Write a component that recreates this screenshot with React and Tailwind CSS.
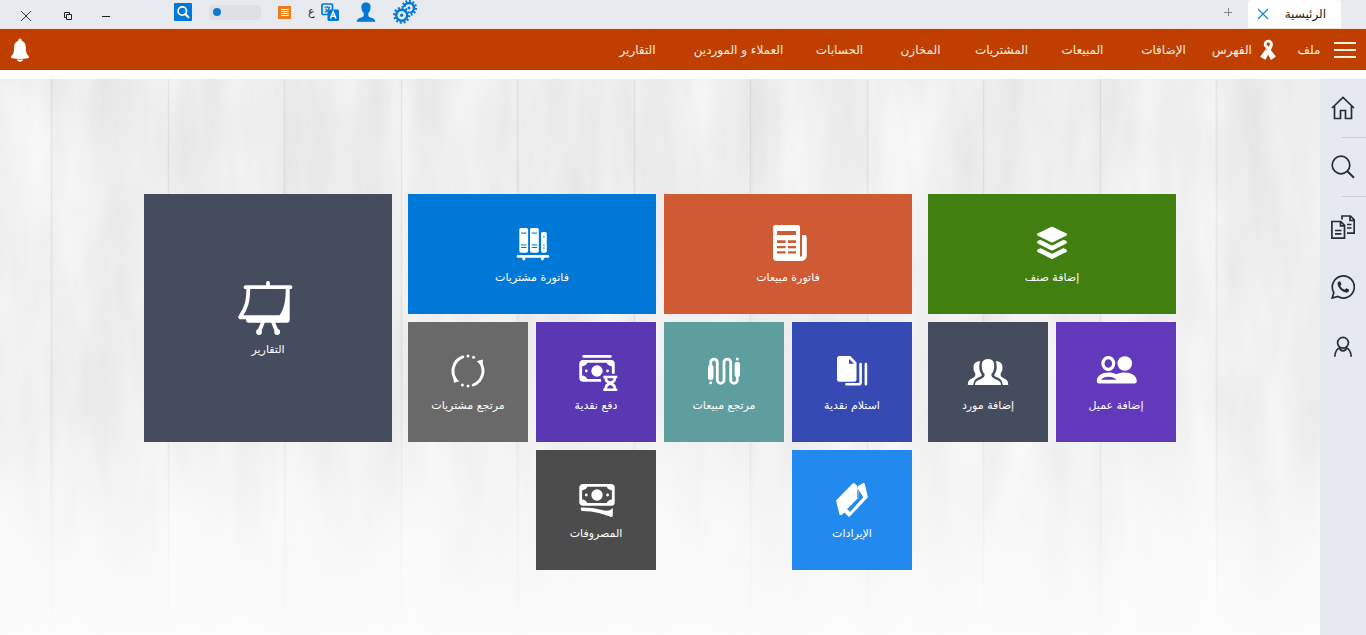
import { useState } from "react";

const NAV_LINKS = [
  { label: "الإضافات" },
  { label: "المبيعات" },
  { label: "المشتريات" },
  { label: "المخازن" },
  { label: "الحسابات" },
  { label: "العملاء و الموردين", wide: true },
  { label: "التقارير" },
];

/* ---------- Tile icons (40x40 grid, white) ---------- */

const TileSvg = ({ children }) => (
  <svg viewBox="0 0 40 40" className="h-10 w-10 overflow-visible" fill="#fff" aria-hidden="true">
    {children}
  </svg>
);

const LayersIcon = () => (
  <TileSvg>
    <path d="M20 4.8 34 11.6 20 18.4 6 11.6z" stroke="#fff" strokeWidth="2.2" strokeLinejoin="round" />
    <path
      d="M6 18.8 8.5 17.6 20 23.4 31.5 17.6 34 18.8 34 19.8 20 26.800 6 19.8z M6 27.200 8.5 26 20 31.800 31.500 26 34 27.200 34 28.200 20 35.200 6 28.200z"
      stroke="#fff"
      strokeWidth="1.6"
      strokeLinejoin="round"
    />
  </TileSvg>
);

const NewspaperIcon = () => (
  <TileSvg>
    <path
      fillRule="evenodd"
      d="M7 2h23a2 2 0 0 1 2 2v29.500h2V12h2.700a2 2 0 0 1 2 2v19a5 5 0 0 1-5 5H9a4 4 0 0 1-4-4V4a2 2 0 0 1 2-2zM9 8v4h19V8zM9 17.300V20h8.600v-2.700zM20 17.300V20h8v-2.700zM9 23v2.300h8.600V23zM20 23v2.300h8V23zM9 28.300v2.300h8.600v-2.300zM20 28.300v2.300h8v-2.300z"
    />
  </TileSvg>
);

const BooksIcon = () => (
  <TileSvg>
    <rect x="7.3" y="5" width="8.8" height="24.7" rx="1.8" />
    <rect x="18" y="5" width="8.8" height="24.7" rx="1.8" />
    <rect x="29" y="9" width="5.8" height="20.7" rx="1.6" />
    <path d="M9 9.200h5.400V11H9zM19.700 9.200h5.400V11h-5.400zM9 21h5.400v1.800H9zM19.700 21h5.400v1.800h-5.400zM31 13h1.800v1.400H31zM31 21.600h1.800V23H31z" fill="#59b4f5" />
    <path d="M9 24h5.400v1H9zM19.700 24h5.400v1h-5.400zM31 24.400h1.800v1H31z" fill="#0078d8" />
    <path d="M6 32h30a1.300 1.300 0 0 1 0 2.700h-4.200v1.400a1.400 1.400 0 0 1-2.800 0v-1.400H13.200v1.400a1.400 1.400 0 0 1-2.800 0v-1.400H6A1.300 1.300 0 0 1 6 32z" />
  </TileSvg>
);

const CustomersIcon = () => (
  <TileSvg>
    <ellipse cx="12.3" cy="12.5" rx="5.4" ry="5.9" fill="none" stroke="#fff" strokeWidth="3.2" />
    <circle cx="28.8" cy="12.5" r="7.3" />
    <path
      fillRule="evenodd"
      d="M.8 30c0-5.500 5.400-8.600 11.700-8.600 3 0 5.500.6 8 1.900 2.500-1.300 5.200-1.900 8.300-1.900 6.300 0 12 3.100 12 8.600 0 1.500-.8 2.400-2.200 2.400H3C1.600 32.400.8 31.500.8 30zM5 28.800h15.500c-2-2-4.600-3-8-3-3.300 0-5.900 1-7.500 3z"
    />
  </TileSvg>
);

const SuppliersIcon = () => (
  <TileSvg>
    <path d="M12.300 10.200c-4.600-.2-6.800 2.300-6.800 6.300 0 2.600.6 4.500 1.800 5.800.5 2.600-.6 4-3.500 5.200-2.800 1.200-4 2.800-4 6.500h5.600c.2-4.300 2.200-6.300 5.500-7.700 2.200-.9 3-1.500 2.900-2.600-1.600-2-2.500-4.300-2.500-7.100 0-2.400.2-4.500 1-6.400z" />
    <path d="M27.700 10.200c4.600-.2 6.800 2.300 6.800 6.300 0 2.600-.6 4.500-1.800 5.800-.5 2.600.6 4 3.500 5.200 2.800 1.200 4 2.800 4 6.500h-5.600c-.2-4.300-2.200-6.300-5.500-7.700-2.200-.9-3-1.500-2.900-2.600 1.600-2 2.500-4.300 2.500-7.100 0-2.400-.2-4.500-1-6.400z" />
    <path d="M20 8c-4.600 0-6.500 2.800-6.200 7.500.1 3.200.9 5.700 2.800 7.600.3 2.300-.8 3.800-4 5.100C8.700 29.700 7 30.800 7 34h26c0-3.200-1.700-4.300-5.600-5.800-3.200-1.300-4.300-2.800-4-5.100 1.900-1.900 2.700-4.400 2.800-7.600C26.500 10.800 24.600 8 20 8z" />
  </TileSvg>
);

const DocumentsIcon = () => (
  <TileSvg>
    <path fillRule="evenodd" d="M7.500 5h10.800l6.200 6.400v16.800a2.500 2.500 0 0 1-2.500 2.500H7.500A2.500 2.500 0 0 1 5 28.200V7.500A2.500 2.500 0 0 1 7.500 5zM17 8v4.800h5.200z" />
    <path d="M28.600 13v18.400q0 1.800-1.800 1.800H14.400M33.900 13v20.200" fill="none" stroke="#fff" strokeWidth="2.6" strokeLinecap="round" />
  </TileSvg>
);

const CablesIcon = () => (
  <TileSvg>
    <path
      d="M6.700 17v-5.600a3.300 3.300 0 0 1 6.600 0V29a3.350 3.350 0 0 0 6.700 0V11.400a3.350 3.350 0 0 1 6.700 0V29a3.300 3.300 0 0 0 6.600 0v-4"
      fill="none"
      stroke="#fff"
      strokeWidth="2.8"
    />
    <rect x="4" y="14" width="5.4" height="15" rx="2.2" />
    <rect x="30.6" y="11" width="5.4" height="15" rx="2.2" />
    <circle cx="6.7" cy="31.8" r="1.5" />
    <circle cx="33.3" cy="8" r="1.5" />
  </TileSvg>
);

const BillShape = ({ y }) => (
  <g transform={`translate(0 ${y})`}>
    <rect x="4.7" y="1.4" width="32.6" height="19" rx="2.2" fill="none" stroke="#fff" strokeWidth="2.8" />
    <path d="M5 1.500h6.500q-.5 4.500-6.500 5zM37 1.500h-6.500q.5 4.500 6.500 5zM5 20.300h6.500q-.5-4.500-6.500-5zM37 20.300h-6.500q.5-4.500 6.500-5z" />
    <circle cx="21" cy="11" r="5.7" />
    <circle cx="10.3" cy="11" r="1.4" />
    <circle cx="31.6" cy="11" r="1.4" />
  </g>
);

const PayCashIcon = () => (
  <TileSvg>
    <rect x="6.3" y="4" width="29.4" height="2.8" rx="1.4" />
    <BillShape y={9} />
    <path d="M25 22.800h16v6l-2 3.500 2 2v7H25z" fill="#5a38b4" />
    <path
      fillRule="evenodd"
      d="M27.300 24.700h14v2.600h-1.200c0 2.600-1.200 4.200-3 5 1.800.8 3 2.400 3 5.100h1.200V40h-14v-2.600h1.200c0-2.700 1.200-4.300 3-5.100-1.800-.8-3-2.400-3-5h-1.200zM31 27.300c.4 1.800 1.500 2.700 3.300 3 1.800-.3 2.900-1.200 3.300-3zM31 37.400h6.600c-.4-1.800-1.500-2.600-3.300-3.400-1.800.8-2.900 1.600-3.300 3.400z"
    />
  </TileSvg>
);

const ReturnIcon = () => (
  <TileSvg>
    <path d="M14.800 5.900A15 15 0 0 0 8 29M31.900 10.900A15 15 0 0 1 25.200 34" fill="none" stroke="#fff" strokeWidth="2.9" strokeLinecap="round" />
    <path d="M28.700 10.200 35 8.600 34.400 15.200zM5.200 25.500 5.900 31.700 11.400 30.300z" />
    <circle cx="20" cy="5" r="1.5" />
    <circle cx="25.6" cy="6.2" r="1.5" />
    <circle cx="14.4" cy="33.9" r="1.5" />
    <circle cx="20" cy="35" r="1.5" />
  </TileSvg>
);

const CardsIcon = () => (
  <TileSvg>
    <path d="M4 21.500 20.700 4.500q1-1 2 0l2.300 2.300 1.500 4.500-.2 8L12.500 33.500 9.700 36 7.600 36z" />
    <path
      fillRule="evenodd"
      d="M26 7 31.500 4q1-.2 1.200.8l3 12.500q.2 1-.5 1.700L18 37.200q-1 .9-1.900 0L12.500 33.400 15 29.500 18 33 31.200 18.200 26 10z"
    />
    <path d="M25.800 10.500v9.200L15.200 30.500" fill="none" stroke="#228aee" strokeWidth="1" />
  </TileSvg>
);

const ExpensesIcon = () => (
  <TileSvg>
    <BillShape y={5} />
    <path d="M5 28.600c8 .2 14 .6 20 2.200 3.400.9 6.400 1.200 9 .4l2.800-2.300v7.700q0 1.400-1.500 1.300C28 35.500 19 31.900 5.600 31.900q-1.200-1.500-.6-3.300z" />
  </TileSvg>
);

const BoardIcon = () => (
  <svg viewBox="0 0 56 56" className="h-14 w-14 overflow-visible" fill="none" stroke="#fff" aria-hidden="true">
    <path d="M28 4v4M5.500 8.200h45" strokeWidth="3.8" strokeLinecap="round" />
    <path d="M8.300 9C8.200 21 6.800 29 .4 37.300" strokeWidth="3.8" />
    <path
      fill="#fff"
      stroke="none"
      d="M45.800 9h3.900v32q0 2.800-2.800 2.800H8.700Q6 43.800 6 40.200h-6.300Q-2.500 39-1.500 36.800L1 36.200h38.500C44.500 30 45.800 20 45.800 9z"
    />
    <path d="M23 43l-4 10M33 43l4 10" strokeWidth="3.8" />
    <circle cx="19" cy="53" r="2.9" fill="#fff" stroke="none" />
    <circle cx="37.2" cy="53" r="2.9" fill="#fff" stroke="none" />
  </svg>
);

/* ---------- Title bar icons ---------- */

const GearShape = ({ cx, cy, r, hole }) => (
  <g transform={`translate(${cx} ${cy})`} fill="none" stroke="#0078d8">
    <circle r={r} strokeWidth="2.4" />
    <circle r={r + 2} strokeWidth="2.2" pathLength="24" strokeDasharray="1 1" />
    <circle r={hole} fill="#0078d8" stroke="none" />
  </g>
);

const GearsIcon = () => (
  <svg viewBox="0 0 24 24" className="h-6 w-6 overflow-visible" aria-hidden="true">
    <GearShape cx={16} cy={8} r={5} hole={1.5} />
    <circle cx="8.7" cy="15.2" r="8.8" fill="#e7eaef" />
    <GearShape cx={8.7} cy={15.2} r={5.5} hole={1.6} />
  </svg>
);

const PersonIcon = () => (
  <svg viewBox="0 0 19 20" className="h-5 w-5" fill="#0078d8" aria-hidden="true">
    <path d="M9.500.5c3 0 4.800 1.900 4.600 5-.2 2.700-1.100 4.500-2.300 5.600v2.700c.4 1.600 3.500 1.800 5.300 3 1.100.7 1.600 1.600 1.700 2.900H.2c.1-1.300.6-2.200 1.700-2.900 1.800-1.200 4.900-1.400 5.300-3v-2.700C6 10 5.100 8.200 4.900 5.500c-.2-3.100 1.600-5 4.600-5z" />
  </svg>
);

const TranslateIcon = () => (
  <svg viewBox="0 0 18 18" className="h-[18px] w-[18px]" aria-hidden="true">
    <rect x="1" y="1" width="10.5" height="10.5" rx="1" fill="#e7eaef" stroke="#0078d8" strokeWidth="1.7" />
    <path d="M3.500 4.300h5.600M6.300 3v1.300M8.200 4.500C7.600 7 6 8.500 3.800 9.300M4.600 5.500c.6 1.700 2 3 3.600 3.600" stroke="#0078d8" strokeWidth="1.1" fill="none" />
    <rect x="6.5" y="6.5" width="11.5" height="11.5" rx="1.5" fill="#0078d8" />
    <path d="M9.400 15.500 12.200 8.800 15 15.500M10.400 13.300h3.600" stroke="#fff" strokeWidth="1.5" fill="none" />
  </svg>
);

const SearchBoxIcon = () => (
  <svg viewBox="0 0 18 18" className="h-[18px] w-[18px]" fill="none" stroke="#fff" aria-hidden="true">
    <rect width="18" height="18" rx="1" fill="#0078d8" stroke="none" />
    <circle cx="8.3" cy="8" r="4.2" strokeWidth="1.8" />
    <path d="M11.400 11.200l3 3" strokeWidth="2.2" strokeLinecap="round" />
  </svg>
);

const ListBoxIcon = () => (
  <svg viewBox="0 0 13 13" className="h-[13px] w-[13px]" aria-hidden="true">
    <rect width="13" height="13" fill="#ee7d1b" />
    <path d="M3 3.500h8M3 5.500h8M3 7.500h8M3 9.500h8" stroke="#fff" strokeWidth="1" />
  </svg>
);

/* ---------- Menu bar icons ---------- */

const RibbonIcon = () => (
  <svg viewBox="0 0 16 22" className="h-[22px] w-4 shrink-0" aria-hidden="true">
    <path d="M8.300.8c3 0 4.700 2.200 4.500 5.300-.2 2.200-1.400 4-2.600 6L5.500 20.700.2 17.800 5.900 10 3.800 6.500C3.600 3.200 5.200.8 8.300.8z" fill="#fff" />
    <path d="M10.300 10.600 15.900 17.600 11 20.900 7.500 14.600z" fill="#fff" />
    <path d="M8.300 3.600c-1.100 0-1.700.7-1.700 1.700L8.300 8 10 5.300C10 4.300 9.400 3.600 8.300 3.600z" fill="#c03f00" />
    <path d="M4.800 8 7 11.400" stroke="#c03f00" strokeWidth=".6" />
  </svg>
);

const BellIcon = () => (
  <svg viewBox="0 0 18 24" className="h-6 w-5" fill="#fff" aria-hidden="true">
    <circle cx="9" cy="2.2" r="1.7" />
    <path d="M9 2.800c4.200 0 5.900 3 5.900 7 0 4.400.6 6.300 2.700 8.200.8.900.4 2-.9 2.200-5 .9-10.400.9-15.400 0C0 20-.4 18.900.4 18c2.100-1.900 2.700-3.800 2.700-8.200 0-4 1.700-7 5.900-7z" />
    <path d="M5.800 21.600c2.100.2 4.300.2 6.400 0-.4 1.500-1.600 2.100-3.200 2.100s-2.800-.6-3.200-2.100z" />
  </svg>
);

/* ---------- Side bar icons ---------- */

const SideSvg = ({ children }) => (
  <svg viewBox="0 0 24 24" className="h-6 w-6" fill="none" stroke="#262d36" strokeWidth="1.7" aria-hidden="true">
    {children}
  </svg>
);

const SIDE_ITEMS = [
  {
    label: "الرئيسية",
    divider: true,
    icon: (
      <SideSvg>
        <path d="M1 12 12 1.500 23 12M3.500 10v12.500h6v-8h5v8h6V10" />
      </SideSvg>
    ),
  },
  {
    label: "بحث",
    divider: true,
    icon: (
      <SideSvg>
        <circle cx="10" cy="10" r="8.8" />
        <path d="M16.300 16.300l6.700 6.500" strokeWidth="2" />
      </SideSvg>
    ),
  },
  {
    label: "مستندات",
    icon: (
      <SideSvg>
        <path d="M11 4.500V1h8.500L23.200 5v13.200H16M19 1.200V5.500h4" />
        <path d="M.9 6.500h9L13.500 10.300v12.800H.9zM9.500 6.800v4h4M4 15.500h6.500M4 18.800h6.500M16 9.500h4.500M16 13h4.500" />
      </SideSvg>
    ),
  },
  {
    label: "واتساب",
    icon: (
      <SideSvg>
        <path d="M1.200 23 2.800 17.500A11 11 0 1 1 6.800 21.500z" />
        <path
          d="M8.300 6.300c-1.200.4-1.900 1.500-1.700 3 .6 3.800 4.200 7.500 8.300 8.300 1.600.2 2.800-.5 3.100-2l-.1-1-2.700-1.400-1.600 1.500c-2-.8-3.400-2.200-4.300-4l1.200-1.500-1.200-2.800z"
          fill="#262d36"
          stroke="none"
        />
      </SideSvg>
    ),
  },
  {
    label: "الحساب",
    icon: (
      <SideSvg>
        <circle cx="12" cy="7.8" r="5.4" />
        <path d="M3.800 21.800c.2-4.800 2.400-8 5.200-9M20.200 21.800c-.2-4.800-2.400-8-5.200-9M8.300 12.200c.5 2.200 1.700 3.600 3.700 3.600s3.200-1.400 3.700-3.600" />
      </SideSvg>
    ),
  },
];

/* ---------- Tiles ---------- */

function Tile({ label, icon, className }) {
  return (
    <button
      type="button"
      className={`flex flex-col items-center justify-center gap-[7px] pt-px text-[11px] leading-4 text-white ${className}`}
    >
      {icon}
      <span>{label}</span>
    </button>
  );
}

// White-washed planks: vertical grain, soft seams, fading to white.
function WoodBackground() {
  return (
    <svg className="absolute inset-0 h-full w-full" aria-hidden="true">
      <defs>
        <filter id="grain" x="0" y="0" width="100%" height="100%" colorInterpolationFilters="sRGB">
          <feTurbulence type="fractalNoise" baseFrequency="0.022 0.005" numOctaves="5" seed="8" />
          <feColorMatrix values="0.1 0 0 0 0.888  0.1 0 0 0 0.888  0.1 0 0 0 0.89  0 0 0 0 1" />
        </filter>
        <pattern id="planks" x="50" y="0" width="233" height="600" patternUnits="userSpaceOnUse">
          <rect x="0" width="4" height="600" fill="#000" opacity=".02" />
          <rect x="1" width="1" height="600" fill="#000" opacity=".045" />
          <rect x="4" width="113" height="600" fill="#000" opacity=".008" />
          <rect x="117" width="3" height="600" fill="#000" opacity=".02" />
          <rect x="118" width="1" height="600" fill="#000" opacity=".045" />
        </pattern>
        <linearGradient id="fade" x1="0" y1="0" x2="0" y2="1">
          <stop offset="0" stopColor="#fff" stopOpacity="0" />
          <stop offset=".6" stopColor="#fff" stopOpacity=".15" />
          <stop offset="1" stopColor="#fcfcfc" stopOpacity=".95" />
        </linearGradient>
      </defs>
      <rect width="100%" height="100%" filter="url(#grain)" />
      <rect width="100%" height="100%" fill="url(#planks)" />
      <rect width="100%" height="100%" fill="url(#fade)" />
    </svg>
  );
}

function TitleBar() {
  const [zoom, setZoom] = useState(4);

  return (
    <header className="flex h-[29px] justify-between border-b border-[#f5e3cf] bg-[#e7eaef]">
      <div className="flex pr-[25px]">
        <div className="flex w-[93px] items-center justify-between rounded-t bg-white pr-[15px] pl-[9px] text-[12px] text-[#222]">
          <span>الرئيسية</span>
          <button type="button" aria-label="إغلاق التبويب">
            <svg viewBox="0 0 12 12" className="h-3 w-3" stroke="#1583cf" strokeWidth="1.2">
              <path d="M1 1l10 10M11 1L1 11" />
            </svg>
          </button>
        </div>
        <button type="button" aria-label="تبويب جديد" className="mb-1 px-4">
          <svg viewBox="0 0 8 8" className="h-2 w-2" stroke="#888" strokeWidth="1">
            <path d="M0 4.500h8M4.500 0v8" />
          </svg>
        </button>
      </div>

      <div dir="ltr" className="flex pl-[6px]">
        <div className="flex pt-1 text-[#222]">
          <button type="button" aria-label="إغلاق" className="grid w-10 place-items-center">
            <svg viewBox="0 0 10 10" className="h-[10px] w-[10px]" stroke="currentColor" strokeWidth=".9">
              <path d="M0 0l10 10M10 0L0 10" />
            </svg>
          </button>
          <button type="button" aria-label="استعادة" className="grid w-11 place-items-center">
            <svg viewBox="0 0 8 8" className="h-2 w-2" fill="none" stroke="currentColor" strokeWidth="1">
              <path d="M2.500 5.500h-2v-5h5v2M2.500 2.500h5v5h-5z" />
            </svg>
          </button>
          <button type="button" aria-label="تصغير" className="grid w-8 place-items-center">
            <svg viewBox="0 0 8 8" className="h-2 w-2" stroke="currentColor" strokeWidth="1">
              <path d="M0 4.500h8" />
            </svg>
          </button>
        </div>

        <div className="mb-1 ml-[52px] flex items-center gap-[17px]">
          <button type="button" aria-label="بحث">
            <SearchBoxIcon />
          </button>
          <input
            type="range"
            aria-label="التكبير"
            value={zoom}
            onChange={(e) => setZoom(Number(e.target.value))}
            className="h-[15px] w-[52px] appearance-none rounded bg-[#dde1e6] px-[2px] [&::-webkit-slider-thumb]:h-2 [&::-webkit-slider-thumb]:w-2 [&::-webkit-slider-thumb]:appearance-none [&::-webkit-slider-thumb]:rounded-full [&::-webkit-slider-thumb]:bg-[#1079cf]"
          />
          <button type="button" aria-label="القائمة">
            <ListBoxIcon />
          </button>
          <button type="button" className="flex items-center gap-[6px] text-[11px] text-[#222]">
            <span>ع</span>
            <TranslateIcon />
          </button>
          <button type="button" aria-label="المستخدم">
            <PersonIcon />
          </button>
          <button type="button" aria-label="الإعدادات">
            <GearsIcon />
          </button>
        </div>
      </div>
    </header>
  );
}

function MenuBar() {
  return (
    <nav className="flex h-[41px] items-center justify-between bg-[#c03f00] px-[10px] text-[12px] text-[#fbeee0]">
      <div className="flex items-center">
        <button type="button" aria-label="القائمة الرئيسية" className="flex w-[22px] flex-col gap-[5px]">
          <span className="h-[2px] bg-[#fdeedd]" />
          <span className="h-[2px] bg-[#fdeedd]" />
          <span className="h-[2px] bg-[#fdeedd]" />
        </button>
        <a href="#" className="w-[50px] text-center">
          ملف
        </a>
        <a href="#" className="flex w-20 items-center justify-center gap-2">
          <RibbonIcon />
          الفهرس
        </a>
        {NAV_LINKS.map((link) => (
          <a
            key={link.label}
            href="#"
            className={`text-center whitespace-nowrap ${link.wide ? "w-[121px]" : "w-[81px]"}`}
          >
            {link.label}
          </a>
        ))}
      </div>
      <button type="button" aria-label="الإشعارات">
        <BellIcon />
      </button>
    </nav>
  );
}

export default function App() {
  return (
    <div
      dir="rtl"
      className="flex min-h-screen flex-col bg-white font-['DejaVu_Sans','Noto_Sans',sans-serif]"
    >
      <TitleBar />
      <MenuBar />

      <div className="mt-[9px] flex flex-1">
        <aside className="w-[46px] shrink-0 bg-[#e6eaf0]">
          {SIDE_ITEMS.map((item) => (
            <div key={item.label}>
              <button
                type="button"
                aria-label={item.label}
                className={`grid w-full place-items-center ${item.divider ? "h-[58px]" : "h-[60px]"}`}
              >
                {item.icon}
              </button>
              {item.divider && <div className="h-px w-6 bg-[#c9cdd3]" />}
            </div>
          ))}
        </aside>

        <main className="relative flex-1">
          <WoodBackground />
          <div className="relative flex justify-center gap-4 pt-[115px] pb-16">
            <section className="grid auto-rows-[120px] grid-cols-[120px_120px] gap-2">
              <Tile label="إضافة صنف" icon={<LayersIcon />} className="col-span-2 bg-[#407f10]" />
              <Tile label="إضافة عميل" icon={<CustomersIcon />} className="bg-[#6239ba]" />
              <Tile label="إضافة مورد" icon={<SuppliersIcon />} className="bg-[#444c5d]" />
            </section>

            <section className="grid auto-rows-[120px] grid-cols-[120px_120px_120px_120px] gap-2">
              <Tile label="فاتورة مبيعات" icon={<NewspaperIcon />} className="col-span-2 bg-[#cf5a34]" />
              <Tile label="فاتورة مشتريات" icon={<BooksIcon />} className="col-span-2 bg-[#0078d8]" />
              <Tile label="استلام نقدية" icon={<DocumentsIcon />} className="bg-[#354bb3]" />
              <Tile label="مرتجع مبيعات" icon={<CablesIcon />} className="bg-[#5f9e9e]" />
              <Tile label="دفع نقدية" icon={<PayCashIcon />} className="bg-[#5a38b4]" />
              <Tile label="مرتجع مشتريات" icon={<ReturnIcon />} className="bg-[#696969]" />
              <Tile label="الإيرادات" icon={<CardsIcon />} className="bg-[#228aee]" />
              <Tile label="المصروفات" icon={<ExpensesIcon />} className="col-start-3 bg-[#4c4c4c]" />
            </section>

            <section className="grid auto-rows-[248px] grid-cols-[248px]">
              <Tile label="التقارير" icon={<BoardIcon />} className="bg-[#444c5d]" />
            </section>
          </div>
        </main>
      </div>
    </div>
  );
}
